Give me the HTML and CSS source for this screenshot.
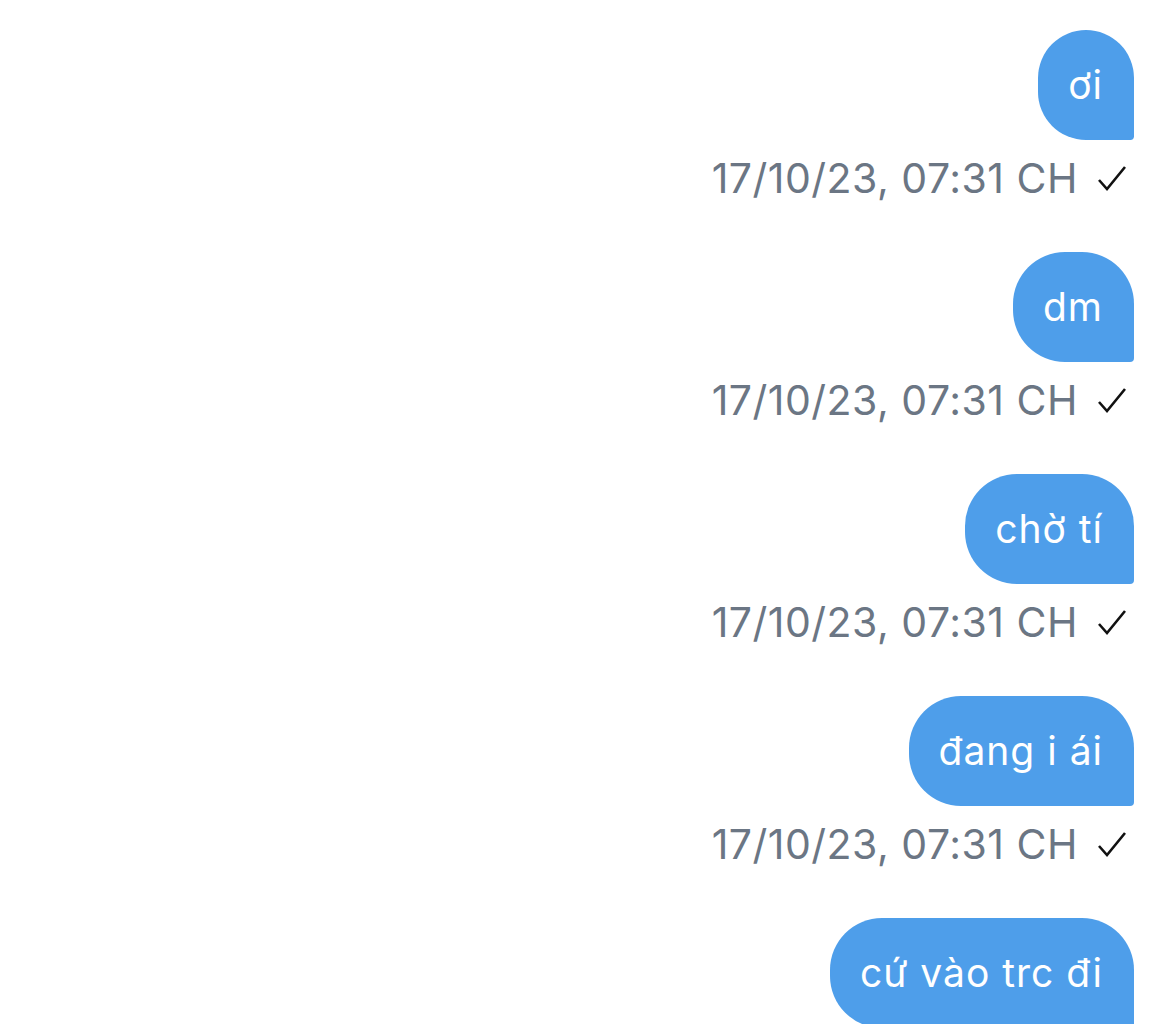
FILE: index.html
```html
<!DOCTYPE html>
<html>
	<head>
		<meta charset="utf-8">
		<title>Chat</title>
		<link rel="stylesheet" href="styles.css">
	</head>
	<body>
		<div id="chat">
			<div class="msg">
				<div class="bubble">ơi</div>
				<div class="meta"><span class="time">17/10/23, 07:31 CH</span><svg class="check" viewBox="0 0 30 30"><path d="M2 17 L10 26 L28 4" /></svg></div>
			</div>
			<div class="msg">
				<div class="bubble">dm</div>
				<div class="meta"><span class="time">17/10/23, 07:31 CH</span><svg class="check" viewBox="0 0 30 30"><path d="M2 17 L10 26 L28 4" /></svg></div>
			</div>
			<div class="msg">
				<div class="bubble">chờ tí</div>
				<div class="meta"><span class="time">17/10/23, 07:31 CH</span><svg class="check" viewBox="0 0 30 30"><path d="M2 17 L10 26 L28 4" /></svg></div>
			</div>
			<div class="msg">
				<div class="bubble">đang i ái</div>
				<div class="meta"><span class="time">17/10/23, 07:31 CH</span><svg class="check" viewBox="0 0 30 30"><path d="M2 17 L10 26 L28 4" /></svg></div>
			</div>
			<div class="msg">
				<div class="bubble">cứ vào trc đi</div>
				<div class="meta"><span class="time">17/10/23, 07:31 CH</span><svg class="check" viewBox="0 0 30 30"><path d="M2 17 L10 26 L28 4" /></svg></div>
			</div>
		</div>
	</body>
</html>
```

FILE: styles.css
```css
* {
	margin: 0;
	padding: 0;
}
body {
	background: #fff;
	font-family: Inter, "Noto Sans", sans-serif;
	overflow: hidden;
}
#chat {
	display: flex;
	flex-direction: column;
	align-items: flex-end;
	padding: 30px 36px 0 0;
}
.msg {
	display: flex;
	flex-direction: column;
	align-items: flex-end;
	margin-bottom: 50px;
}
.bubble {
	background: #4e9eea;
	color: #fff;
	font-size: 39px;
	letter-spacing: 1px;
	line-height: 110px;
	height: 110px;
	padding: 0 31px 0 30px;
	border-radius: 52px 52px 4px 52px;
}
.meta {
	display: flex;
	align-items: center;
	height: 48px;
	margin-top: 14px;
	margin-right: 7px;
}
.time {
	color: #6b7684;
	font-size: 41px;
	letter-spacing: 0.5px;
}
.check {
	width: 30px;
	height: 30px;
	margin-left: 19px;
	fill: none;
	stroke: #111;
	stroke-width: 2.6;
}
```
